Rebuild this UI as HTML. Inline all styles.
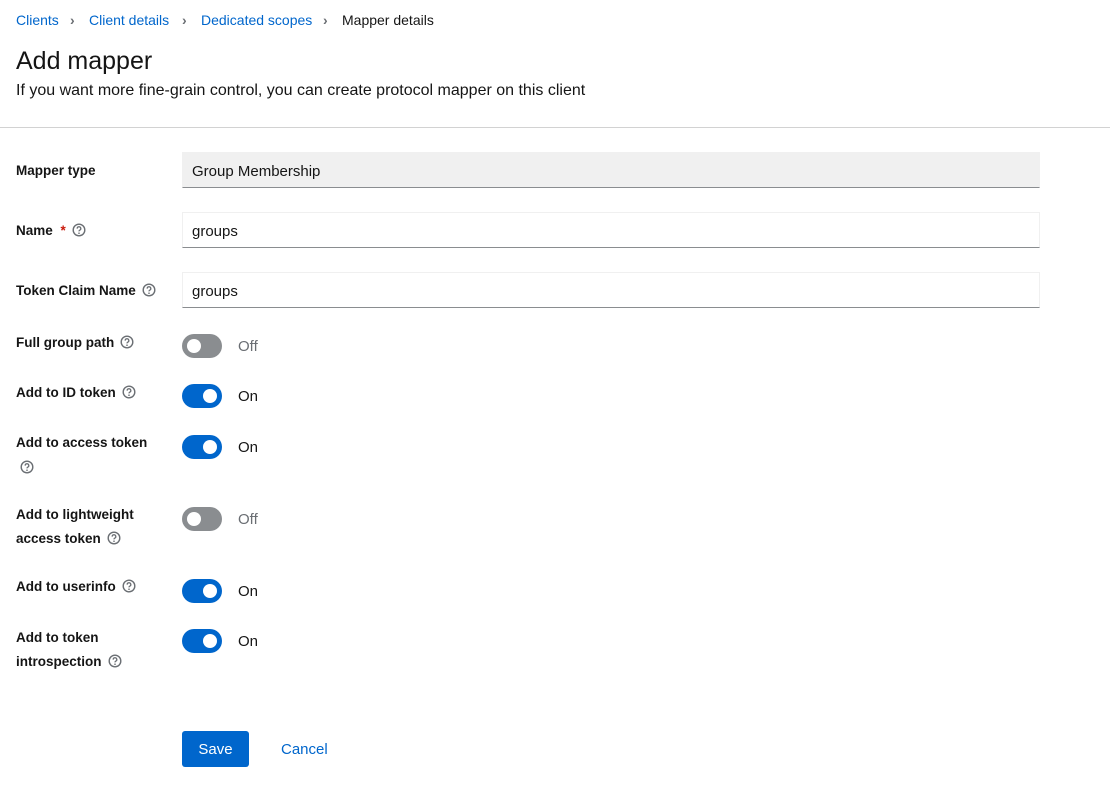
<!DOCTYPE html>
<html><head><style>
*{margin:0;padding:0;box-sizing:border-box}
body{width:1110px;height:803px;background:#fff;font-family:"Liberation Sans",sans-serif;color:#151515;position:relative;overflow:hidden}
.a{position:absolute;white-space:nowrap}
.bc{top:12px;font-size:14px;color:#0066cc}
.ch{font-weight:bold;color:#6a6e73}
.lbl{font-size:13.5px;font-weight:bold;line-height:24px}
.inp{position:absolute;left:182px;width:858px;height:36px;border:1px solid #f0f0f0;border-bottom:1px solid #8a8d90;font-size:15px;padding:10px 9px 6px}
.tg{position:absolute;left:182px;width:40px;height:24px;border-radius:12px;background:#0066cc}
.tg::after{content:"";position:absolute;top:5px;left:21px;width:14px;height:14px;border-radius:50%;background:#fff}
.tg.off{background:#8a8d90}
.tg.off::after{left:5px}
.st{position:absolute;left:238px;font-size:15px;line-height:20px}
.q{display:inline-block;vertical-align:middle;margin-left:6px;margin-top:-3px}
</style></head><body>
<svg width="0" height="0" style="position:absolute"><defs><g id="h"><circle cx="7" cy="7" r="5.8" fill="none" stroke="#6a6e73" stroke-width="1.4"/><path d="M5.2 5.6a1.8 1.8 0 1 1 2.5 1.6c-.5.3-.7.6-.7 1.2" fill="none" stroke="#6a6e73" stroke-width="1.3"/><circle cx="7" cy="10.2" r=".8" fill="#6a6e73"/></g></defs></svg>
<div class="a bc" style="left:16px">Clients</div>
<div class="a bc ch" style="left:70px">›</div>
<div class="a bc" style="left:89px">Client details</div>
<div class="a bc ch" style="left:182px">›</div>
<div class="a bc" style="left:201px">Dedicated scopes</div>
<div class="a bc ch" style="left:323px">›</div>
<div class="a bc" style="left:342px;color:#151515">Mapper details</div>
<div class="a" style="left:16px;top:47px;font-size:25px">Add mapper</div>
<div class="a" style="left:16px;top:82px;font-size:16px">If you want more fine-grain control, you can create protocol mapper on this client</div>
<div class="a" style="left:0;top:127px;width:1110px;height:1px;background:#d2d2d2"></div>

<div class="a lbl" style="left:16px;top:159px">Mapper type</div>
<div class="inp" style="top:152px;background:#f0f0f0">Group Membership</div>
<div class="a lbl" style="left:16px;top:219px">Name <span style="color:#c9190b;margin-left:4px">*</span><svg class="q" width="14" height="14"><use href="#h"/></svg></div>
<div class="inp" style="top:212px">groups</div>
<div class="a lbl" style="left:16px;top:279px">Token Claim Name<svg class="q" width="14" height="14"><use href="#h"/></svg></div>
<div class="inp" style="top:272px">groups</div>

<div class="a lbl" style="left:16px;top:331px">Full group path<svg class="q" width="14" height="14"><use href="#h"/></svg></div>
<div class="tg off" style="top:334px"></div><div class="st" style="top:337px;color:#6a6e73">Off</div>
<div class="a lbl" style="left:16px;top:381px">Add to ID token<svg class="q" width="14" height="14"><use href="#h"/></svg></div>
<div class="tg" style="top:384px"></div><div class="st" style="top:387px">On</div>
<div class="a lbl" style="left:16px;top:431px">Add to access token</div>
<svg class="a" style="left:20px;top:460px" width="14" height="14"><use href="#h"/></svg>
<div class="tg" style="top:435px"></div><div class="st" style="top:438px">On</div>
<div class="a lbl" style="left:16px;top:503px">Add to lightweight</div>
<div class="a lbl" style="left:16px;top:527px">access token<svg class="q" width="14" height="14"><use href="#h"/></svg></div>
<div class="tg off" style="top:507px"></div><div class="st" style="top:510px;color:#6a6e73">Off</div>
<div class="a lbl" style="left:16px;top:575px">Add to userinfo<svg class="q" width="14" height="14"><use href="#h"/></svg></div>
<div class="tg" style="top:579px"></div><div class="st" style="top:582px">On</div>
<div class="a lbl" style="left:16px;top:626px">Add to token</div>
<div class="a lbl" style="left:16px;top:650px">introspection<svg class="q" width="14" height="14"><use href="#h"/></svg></div>
<div class="tg" style="top:629px"></div><div class="st" style="top:632px">On</div>

<div class="a" style="left:182px;top:731px;width:67px;height:36px;background:#0066cc;color:#fff;font-size:15px;line-height:38px;text-align:center;border-radius:3px">Save</div>
<div class="a" style="left:281px;top:741px;font-size:15px;color:#0066cc">Cancel</div>
</body></html>
